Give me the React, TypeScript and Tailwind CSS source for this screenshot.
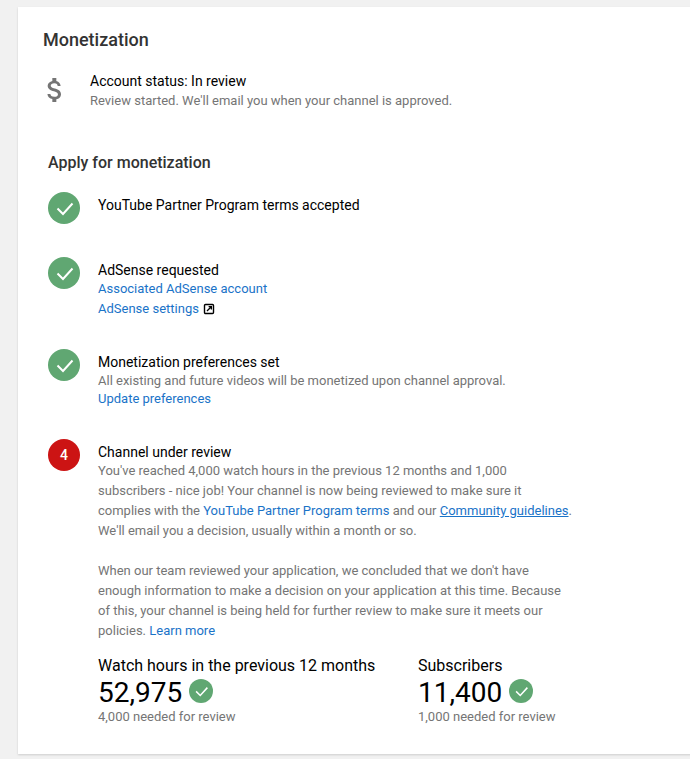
const LINK = "text-[#1a73c8]";

function CheckBadge({ size }: { size: number }) {
  return (
    <svg width={size} height={size} viewBox="0 0 32 32" className="shrink-0 block">
      <circle cx="16" cy="16" r="16" fill="#60a772" />
      <path d="M9.5 16.5l5.5 5.5L24.5 11.5" fill="none" stroke="#fff" strokeWidth="2" />
    </svg>
  );
}

function Step({ badge, title, children, className }: { badge: React.ReactNode; title: string; children?: React.ReactNode; className?: string }) {
  return (
    <div className={`flex ${className ?? ""}`}>
      <div className="w-[50px] shrink-0">{badge}</div>
      <div className="min-w-0 pt-[3px]">
        <div className="text-sm leading-[20px] text-black">{title}</div>
        {children}
      </div>
    </div>
  );
}

function Stat({ label, value, note, className }: { label: string; value: string; note: string; className?: string }) {
  return (
    <div className={className}>
      <div className="text-base leading-[20px] text-black">{label}</div>
      <div className="flex items-center gap-[7px] h-[32px] mt-[1px]">
        <span className="text-[28px] leading-[32px] text-black">{value}</span>
        <span className="-mt-[4px]"><CheckBadge size={24} /></span>
      </div>
      <div className="text-[13px] leading-[20px] -mt-[2px] text-[#757575]">{note}</div>
    </div>
  );
}

export default function App() {
  return (
    <div className="h-[759px] overflow-hidden bg-[#f1f1f1] pt-[7px] pl-[18px] font-['Roboto',sans-serif]">
      <div className="w-[700px] h-[747px] bg-white shadow-[0_1px_2px_rgba(0,0,0,0.15)] pl-[25px] pt-[21px]">
        <h1 className="text-lg leading-[24px] font-medium text-[#333]">Monetization</h1>

        <div className="flex mt-[19px] ml-[1px]">
          <div className="w-[46px] shrink-0 pt-[3px]">
            <svg width="32" height="32" viewBox="0 0 24 24" className="block -ml-[5px]">
              <path fill="#757575" d="M11.8 10.9c-2.27-.59-3-1.2-3-2.15 0-1.09 1.01-1.85 2.7-1.85 1.78 0 2.44.85 2.5 2.1h2.21c-.07-1.72-1.12-3.3-3.21-3.81V3h-3v2.16c-1.94.42-3.5 1.68-3.5 3.61 0 2.31 1.91 3.46 4.7 4.13 2.5.6 3 1.48 3 2.41 0 .69-.49 1.79-2.7 1.79-2.06 0-2.87-.92-2.98-2.1h-2.2c.12 2.19 1.76 3.42 3.68 3.83V21h3v-2.15c1.95-.37 3.5-1.5 3.5-3.55 0-2.84-2.43-3.81-4.7-4.4z" />
            </svg>
          </div>
          <div>
            <div className="text-sm leading-[20px] text-black">Account status: In review</div>
            <div className="text-[13px] leading-[20px] text-[#757575]">Review started. We'll email you when your channel is approved.</div>
          </div>
        </div>

        <div className="ml-[5px]">
          <h2 className="mt-[41px] text-base leading-[22px] font-medium text-[#333]">Apply for monetization</h2>

          <Step className="mt-[18px]" badge={<CheckBadge size={32} />} title="YouTube Partner Program terms accepted" />

          <Step className="mt-[33px]" badge={<CheckBadge size={32} />} title="AdSense requested">
            <div className={`text-[13px] leading-[18px] ${LINK}`}>Associated AdSense account</div>
            <div className={`flex items-center text-[13px] leading-[22px] ${LINK}`}>
              AdSense settings
              <svg width="12" height="12" viewBox="0 0 12 12" className="ml-[4px]">
                <rect x="1.5" y="1.5" width="9" height="9" rx="1" fill="none" stroke="#000" strokeWidth="1.4" />
                <path d="M4 8l4-4M5.6 3.6h2.8v2.8" fill="none" stroke="#000" strokeWidth="1.3" />
              </svg>
            </div>
          </Step>

          <Step className="mt-[29px]" badge={<CheckBadge size={32} />} title="Monetization preferences set">
            <div className="text-[13px] leading-[18px] text-[#757575]">All existing and future videos will be monetized upon channel approval.</div>
            <div className={`text-[13px] leading-[18px] ${LINK}`}>Update preferences</div>
          </Step>

          <Step
            className="mt-[31px]"
            badge={
              <div className="w-[32px] h-[32px] rounded-full bg-[#cc1414] text-white text-sm font-medium flex items-center justify-center">4</div>
            }
            title="Channel under review"
          >
            <div className="w-[476px] -mt-[1px] text-[13px] leading-[20px] text-[#757575]">
              <p>
                You've reached 4,000 watch hours in the previous 12 months and 1,000 subscribers - nice job! Your channel is now being reviewed to make sure it complies with the <span className={LINK}>YouTube Partner Program terms</span> and our <span className={`${LINK} underline`}>Community guidelines</span>. We'll email you a decision, usually within a month or so.
              </p>
              <p className="mt-[20px]">
                When our team reviewed your application, we concluded that we don't have enough information to make a decision on your application at this time. Because of this, your channel is being held for further review to make sure it meets our policies. <span className={LINK}>Learn more</span>
              </p>
            </div>
            <div className="flex mt-[15px]">
              <Stat className="w-[320px]" label="Watch hours in the previous 12 months" value="52,975" note="4,000 needed for review" />
              <Stat label="Subscribers" value="11,400" note="1,000 needed for review" />
            </div>
          </Step>
        </div>
      </div>
    </div>
  );
}
